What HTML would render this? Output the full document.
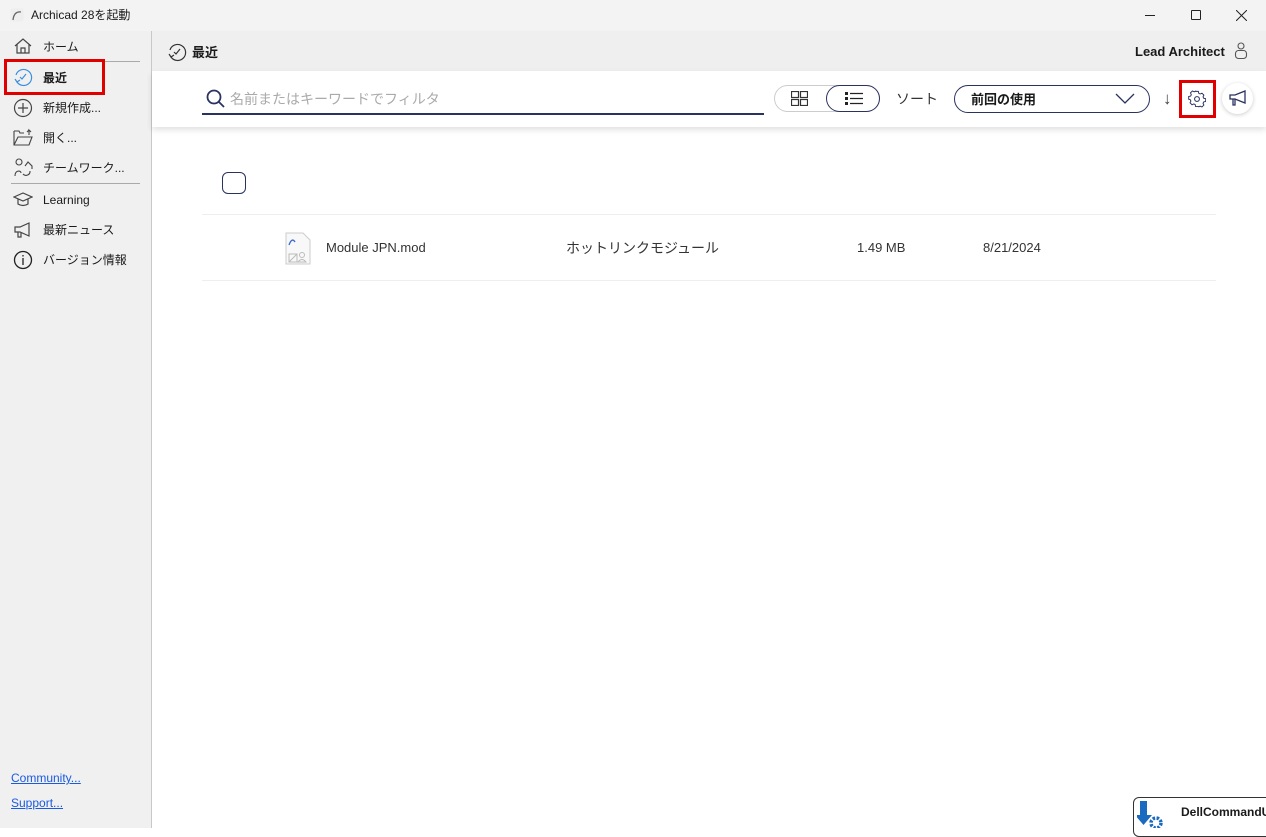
<!DOCTYPE html>
<html><head><meta charset="utf-8"><style>
*{box-sizing:border-box;margin:0;padding:0}
body{width:1266px;height:828px;overflow:hidden;background:#fff;font-family:"Liberation Sans","Noto Sans CJK JP",sans-serif;position:relative;color:#1a1a1a;line-height:1.2}
.a{position:absolute}
.side{left:0;top:31px;width:152px;height:797px;background:#f0f0f0;border-right:1px solid #c8c8c8}
.si{position:absolute;left:43px;font-size:12px;color:#1a1a1a;white-space:nowrap}
.ic{position:absolute;left:13px;width:20px;height:20px}
.t{font-size:13px;white-space:nowrap}
</style></head><body>
<div class="a" style="left:0;top:0;width:1266px;height:31px;background:#f3f3f3"></div>
<svg class="a" style="left:10px;top:8px" width="14" height="14"><rect x="0.5" y="0.5" width="13" height="13" rx="2" fill="#eee"/><path d="M3 12 Q4 3 11 4" stroke="#666" fill="none" stroke-width="1.3"/></svg>
<div class="a" style="left:31px;top:8px;font-size:12px">Archicad 28を起動</div>
<div class="a" style="left:1145px;top:15px;width:10px;height:1px;background:#222"></div>
<div class="a" style="left:1191px;top:10px;width:10px;height:10px;border:1px solid #222;border-radius:1px"></div>
<svg class="a" style="left:1236px;top:10px" width="11" height="11"><path d="M0 0L11 11M11 0L0 11" stroke="#222" stroke-width="1"/></svg>

<div class="a side"></div>
<svg class="ic" style="top:36px" viewBox="0 0 20 20" fill="none" stroke="#444" stroke-width="1.2"><path d="M2 10L10 3L18 10M4 8V17H16V8M8 17V12H12V17"/></svg>
<div class="si" style="top:40px">ホーム</div>
<div class="a" style="left:11px;top:61px;width:129px;height:1px;background:#aaa"></div>
<svg class="ic" style="top:67px" viewBox="0 0 20 20" fill="none" stroke="#3a8fe0" stroke-width="1.2"><path d="M4 15A8 8 0 1 0 3 8"/><path d="M2 12L4 15L7 13M7 10L9 12L13 7"/></svg>
<div class="si" style="top:71px;font-weight:bold">最近</div>
<div class="a" style="left:4px;top:59px;width:101px;height:36px;border:3px solid #e00000"></div>
<svg class="ic" style="top:98px" viewBox="0 0 20 20" fill="none" stroke="#444" stroke-width="1.2"><circle cx="10" cy="10" r="8.5"/><path d="M10 5V15M5 10H15"/></svg>
<div class="si" style="top:101px">新規作成...</div>
<svg class="ic" style="top:127px" viewBox="0 0 20 20" fill="none" stroke="#444" stroke-width="1.1"><path d="M1 4H6L7 6H11M1 4V18H16L19 10H5L1 18M16 8V3L18 5M16 3L14 5"/></svg>
<div class="si" style="top:131px">開く...</div>
<svg class="ic" style="top:157px" viewBox="0 0 20 20" fill="none" stroke="#444" stroke-width="1.1"><circle cx="6" cy="5" r="3"/><path d="M2 19C2 13 8 13 8 16M12 9L15 5L19 9V12M10 17A4 4 0 0 0 17 14"/></svg>
<div class="si" style="top:161px">チームワーク...</div>
<div class="a" style="left:11px;top:183px;width:129px;height:1px;background:#aaa"></div>
<svg class="ic" style="top:190px" viewBox="0 0 20 20" fill="none" stroke="#444" stroke-width="1.2"><path d="M1 7L10 3L19 7L10 11Z M5 9V14C8 16 12 16 15 14V9"/></svg>
<div class="si" style="top:193px">Learning</div>
<svg class="ic" style="top:220px" viewBox="0 0 20 20" fill="none" stroke="#444" stroke-width="1.2"><path d="M2 7H7L16 3V16L7 12H2Z M5 12V17H8V12"/></svg>
<div class="si" style="top:223px">最新ニュース</div>
<svg class="ic" style="top:250px" viewBox="0 0 20 20" fill="none" stroke="#222" stroke-width="1.3"><circle cx="10" cy="10" r="8.5"/><path d="M10 8V15M10 5V6.5"/></svg>
<div class="si" style="top:253px">バージョン情報</div>
<div class="a" style="left:11px;top:771px;font-size:12px;color:#1a5ae0;text-decoration:underline">Community...</div>
<div class="a" style="left:11px;top:796px;font-size:12px;color:#1a5ae0;text-decoration:underline">Support...</div>

<div class="a" style="left:152px;top:31px;width:1114px;height:40px;background:#efefef"></div>
<svg class="a" style="left:167px;top:42px" width="20" height="20" viewBox="0 0 20 20" fill="none" stroke="#333" stroke-width="1.2"><path d="M4 15A8 8 0 1 0 3 8"/><path d="M2 12L4 15L7 13M7 10L9 12L13 7"/></svg>
<div class="a t" style="left:192px;top:45px;font-weight:bold">最近</div>
<div class="a t" style="left:1135px;top:44px;font-weight:bold">Lead Architect</div>
<svg class="a" style="left:1234px;top:42px" width="14" height="18" viewBox="0 0 14 18" fill="none" stroke="#555" stroke-width="1.1"><circle cx="7" cy="4" r="3"/><rect x="1.5" y="8.5" width="11" height="8" rx="3"/></svg>

<div class="a" style="left:152px;top:71px;width:1114px;height:56px;background:#fff;box-shadow:0 3px 6px rgba(0,0,0,0.12)"></div>
<svg class="a" style="left:206px;top:89px" width="19" height="19" viewBox="0 0 19 19" fill="none" stroke="#2a3260" stroke-width="1.8"><circle cx="8" cy="8" r="6.5"/><path d="M12.5 12.5L18 18"/></svg>
<div class="a" style="left:230px;top:91px;font-size:14px;color:#aaa">名前またはキーワードでフィルタ</div>
<div class="a" style="left:202px;top:113px;width:562px;height:2px;background:#2a3260"></div>
<div class="a" style="left:774px;top:85px;width:106px;height:27px;border:1px solid #ccc;border-radius:14px"></div>
<svg class="a" style="left:791px;top:91px" width="17" height="15" fill="none" stroke="#333" stroke-width="1.2"><rect x="0.5" y="0.5" width="7" height="6"/><rect x="9.5" y="0.5" width="7" height="6"/><rect x="0.5" y="8.5" width="7" height="6"/><rect x="9.5" y="8.5" width="7" height="6"/></svg>
<div class="a" style="left:826px;top:85px;width:54px;height:27px;border:1.3px solid #2a3260;border-radius:14px"></div>
<svg class="a" style="left:845px;top:92px" width="18" height="13"><path d="M0 1.5H3M0 6.5H3M0 11.5H3" stroke="#222" stroke-width="3"/><path d="M5 1.5H18M5 6.5H18M5 11.5H18" stroke="#222" stroke-width="1.2"/></svg>
<div class="a" style="left:896px;top:91px;font-size:14px;color:#333">ソート</div>
<div class="a" style="left:954px;top:85px;width:196px;height:28px;border:1.3px solid #2a3260;border-radius:14px"></div>
<div class="a t" style="left:971px;top:92px;font-weight:bold">前回の使用</div>
<svg class="a" style="left:1115px;top:93px" width="20" height="11" fill="none" stroke="#2a3260" stroke-width="1.3"><path d="M1 1L10 10L19 1"/></svg>
<div class="a" style="left:1163px;top:89px;font-size:17px;color:#444">↓</div>
<div class="a" style="left:1179px;top:80px;width:37px;height:38px;border:3px solid #e00000"></div>
<svg class="a" style="left:1188px;top:90px" width="18" height="18" viewBox="0 0 24 24" fill="none" stroke="#2a3260" stroke-width="1.4"><circle cx="12" cy="12" r="3.2"/><path d="M10 2h4l.6 2.8 2 1 2.6-1.2 2.8 2.8-1.2 2.6 1 2 2.8.6v4l-2.8.6-1 2 1.2 2.6-2.8 2.8-2.6-1.2-2 1L14 24h-4l-.6-2.8-2-1-2.6 1.2L2 18.6l1.2-2.6-1-2L0 13.4v-4l2.8-.6 1-2L2.6 4.2 5.4 1.4 8 2.6l2-1z" transform="scale(0.92) translate(1 0)"/></svg>
<div class="a" style="left:1222px;top:83px;width:31px;height:31px;border-radius:50%;background:#fff;box-shadow:0 1px 4px rgba(0,0,0,0.2)"></div>
<svg class="a" style="left:1229px;top:90px" width="18" height="17" viewBox="0 0 18 17" fill="none" stroke="#2a3260" stroke-width="1.3"><path d="M1 5H6L16 1V13L6 9H1Z M4 9V15H6V9"/></svg>

<div class="a" style="left:222px;top:172px;width:24px;height:22px;border:1.3px solid #2a3260;border-radius:6px"></div>
<div class="a" style="left:202px;top:214px;width:1014px;height:1px;background:#eee"></div>
<svg class="a" style="left:285px;top:232px" width="26" height="33" viewBox="0 0 26 33"><path d="M1 1H18L25 8V32H1Z" fill="#f8f8f8" stroke="#ccc"/><path d="M4 13Q7 5 10 10" stroke="#3a6ad0" fill="none" stroke-width="1.3"/><path d="M4 22h8v8H4zM4 30L12 22" stroke="#bbb" fill="none"/><circle cx="17" cy="23" r="2.5" stroke="#bbb" fill="none"/><path d="M13 30Q17 25 21 30Z" stroke="#bbb" fill="none"/></svg>
<div class="a t" style="left:326px;top:240px;color:#333">Module JPN.mod</div>
<div class="a" style="left:566px;top:240px;font-size:14px;color:#333">ホットリンクモジュール</div>
<div class="a t" style="left:857px;top:240px;color:#333">1.49 MB</div>
<div class="a t" style="left:983px;top:240px;color:#333">8/21/2024</div>
<div class="a" style="left:202px;top:280px;width:1014px;height:1px;background:#eee"></div>

<div class="a" style="left:1133px;top:797px;width:140px;height:40px;background:#fff;border:1px solid #333;border-radius:6px"></div>
<svg class="a" style="left:1137px;top:801px" width="34" height="27"><path d="M3 0h7v14h5L6.5 24 -2 14h5z" fill="#1a6ac0"/><circle cx="19" cy="22" r="5" fill="none" stroke="#1a6ac0" stroke-width="3.5" stroke-dasharray="2.5 1.5"/></svg>
<div class="a" style="left:1181px;top:805px;font-size:12px;font-weight:bold">DellCommandU</div>
</body></html>
